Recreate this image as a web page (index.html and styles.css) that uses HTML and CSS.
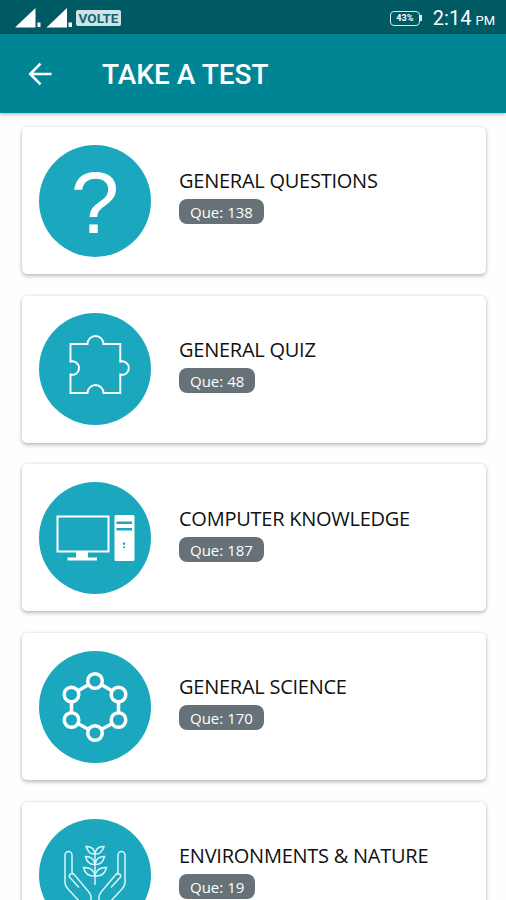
FILE: index.html
```
<!DOCTYPE html>
<html lang="en">
  <head>
    <meta charset="UTF-8" />
    <meta name="viewport" content="width=device-width, initial-scale=1.0" />
    <title>Take a Test</title>
    <link rel="stylesheet" href="styles.css">
  </head>
  <body>
    <div class="status-bar">
      <svg class="signal" width="60" height="24" viewBox="0 0 60 24">
        <path d="M0 21.500 L20.500 2 V21.500 Z M22.500 16.500h3v4.500h-3z M31.500 21.500 L52 2 V21.500 Z M53.500 16.500h3.500v4.500h-3.500z" fill="#fff" />
      </svg>
      <span class="volte">VOLTE</span>
      <span class="battery">43%</span>
      <span class="time">2:14</span>
      <span class="period">PM</span>
    </div>

    <header>
      <svg class="back" width="24" height="24" viewBox="0 0 24 24" fill="none" stroke="#fff" stroke-width="2.600">
        <path d="M23.500 12H2.500M12.500 1.700L2.200 12l10.300 10.300" />
      </svg>
      <h1>TAKE A TEST</h1>
    </header>

    <main>
      <div class="card">
        <svg class="icon" viewBox="0 0 112 112">
          <circle class="disc" cx="56" cy="56" r="56" />
          <text class="mark" x="56" y="88" text-anchor="middle">?</text>
        </svg>
        <div class="info">
          <h2>GENERAL QUESTIONS</h2>
          <span class="badge">Que: 138</span>
        </div>
      </div>

      <div class="card">
        <svg class="icon" viewBox="0 0 112 112">
          <circle class="disc" cx="56" cy="56" r="56" />
          <path class="line" stroke-width="1.900" d="M31.500 31H48.500A8 8 0 0 1 64.500 31H81.300V48.600A6.700 6.700 0 1 1 81.300 61.500V80H64.500A8 8 0 0 0 48.500 80H31.500V61.500A6.700 6.700 0 1 0 31.500 48.600Z" />
        </svg>
        <div class="info">
          <h2>GENERAL QUIZ</h2>
          <span class="badge">Que: 48</span>
        </div>
      </div>

      <div class="card">
        <svg class="icon" viewBox="0 0 112 112">
          <circle class="disc" cx="56" cy="56" r="56" />
          <rect class="line" stroke-width="2" x="18.500" y="34.500" width="51" height="35" />
          <path class="solid" d="M37 70h12v5.500h9v3H28.500v-3H37z" />
          <rect class="solid" x="75.500" y="33" width="20" height="46" rx="1.500" />
          <path class="disc" d="M77.500 39.500h15.500v2.500H77.500zM77.500 46h15.500v2.500H77.500zM84 60.500h2.200v2.200H84zM84 64.500h2.200v1.500H84z" />
        </svg>
        <div class="info">
          <h2>COMPUTER KNOWLEDGE</h2>
          <span class="badge">Que: 187</span>
        </div>
      </div>

      <div class="card">
        <svg class="icon" viewBox="0 0 112 112">
          <circle class="disc" cx="56" cy="56" r="56" />
          <path class="line" stroke-width="3.500" d="M56 30L79.500 43.500V69L56 82L32.500 69V43.500Z" />
          <g class="node">
            <circle cx="56" cy="30" r="7.300" />
            <circle cx="79.500" cy="43.500" r="7.300" />
            <circle cx="79.500" cy="69" r="7.300" />
            <circle cx="56" cy="82" r="7.300" />
            <circle cx="32.500" cy="69" r="7.300" />
            <circle cx="32.500" cy="43.500" r="7.300" />
          </g>
        </svg>
        <div class="info">
          <h2>GENERAL SCIENCE</h2>
          <span class="badge">Que: 170</span>
        </div>
      </div>

      <div class="card">
        <svg class="icon" viewBox="0 0 112 112">
          <circle class="disc" cx="56" cy="56" r="56" />
          <g class="line thin">
            <path d="M56 66V32" />
            <path d="M56 35Q50 36 47 27.500Q55 27 56 35Q57 27 65 27.500Q62 36 56 35" />
            <path d="M56 45.500Q49 46.500 46.500 37.500Q55 37.500 56 45.500Q57 37.500 65.500 37.500Q63 46.500 56 45.500" />
            <path d="M56 57Q47 58 44.500 48.500Q54.500 48 56 57Q57.500 48 67.500 48.500Q65 58 56 57" />
            <path id="hand" d="M52 94V79Q52 75 49 72L36 56.500Q33 52.500 33 55V36A3.500 3.500 0 0 0 26 36V63Q26 67 29 70L41 83V94M30 57.500Q31 53.500 35 55.500M30 57.500L40 68.500" />
            <use href="#hand" transform="matrix(-1 0 0 1 112 0)" />
          </g>
        </svg>
        <div class="info">
          <h2>ENVIRONMENTS &amp; NATURE</h2>
          <span class="badge">Que: 19</span>
        </div>
      </div>
    </main>
  </body>
</html>
```
FILE: styles.css
```
* {
  box-sizing: border-box;
}

body {
  margin: 0;
  height: 900px;
  overflow: hidden;
  background-color: #fefefe;
  font-family: Roboto, sans-serif;
}

.status-bar {
  display: flex;
  align-items: center;
  height: 34px;
  padding: 2px 11px 0 15px;
  background-color: #005a64;
  color: #fff;
}

.volte {
  width: 45px;
  height: 16px;
  margin-left: 1px;
  border-radius: 2px;
  background-color: #cfe3e6;
  color: #17656f;
  font-size: 13.5px;
  font-weight: 700;
  line-height: 17px;
  text-align: center;
}

.battery {
  position: relative;
  width: 30px;
  height: 15px;
  margin-left: auto;
  border: 1.5px solid #dcebec;
  border-radius: 4px;
  font-size: 9px;
  font-weight: 700;
  line-height: 12px;
  text-align: center;
}

.battery::after {
  content: "";
  position: absolute;
  top: 3px;
  right: -3px;
  width: 2px;
  height: 6px;
  background-color: #dcebec;
}

.time {
  margin-left: 13px;
  font-size: 20px;
}

.period {
  margin: 4px 0 0 4px;
  font-size: 13px;
}

header {
  position: relative;
  display: flex;
  align-items: center;
  height: 79px;
  padding-left: 28px;
  background-color: #008594;
  box-shadow: 0 1px 4px rgba(0, 0, 0, 0.35);
}

h1 {
  margin: 2px 0 0 50px;
  color: #fff;
  font-size: 28px;
  font-weight: 500;
}

main {
  display: flex;
  flex-direction: column;
  gap: 21.7px;
  height: 787px;
  padding: 14px 20px 0 22px;
  overflow: hidden;
}

.card {
  display: flex;
  flex-shrink: 0;
  height: 147px;
  padding: 17.5px 17px;
  border-radius: 5px;
  background-color: #fff;
  box-shadow: 0 2px 4px rgba(0, 0, 0, 0.25), 0 0 3px rgba(0, 0, 0, 0.1);
}

.icon {
  width: 112px;
  height: 112px;
}

.disc {
  fill: #1ba8bf;
}

.mark {
  fill: #fff;
  font-family: "Liberation Sans", sans-serif;
  font-size: 87px;
}

.line {
  fill: none;
  stroke: #fff;
}

.thin {
  stroke: #d8f3f7;
  stroke-width: 1.5;
}

.solid {
  fill: #fff;
}

.node {
  fill: #1ba8bf;
  stroke: #fff;
  stroke-width: 3.5;
}

.info {
  padding: 23.9px 0 0 28px;
}

h2 {
  margin: 0 0 5px;
  color: #111;
  font-family: "Open Sans", sans-serif;
  font-size: 20px;
  font-weight: 400;
  letter-spacing: -0.25px;
  line-height: 26px;
  white-space: nowrap;
}

.badge {
  display: block;
  width: fit-content;
  height: 25px;
  padding: 0 11px;
  border-radius: 8px;
  background-color: #667277;
  color: #fff;
  font-family: "Open Sans", sans-serif;
  font-size: 15px;
  line-height: 26px;
}
```
